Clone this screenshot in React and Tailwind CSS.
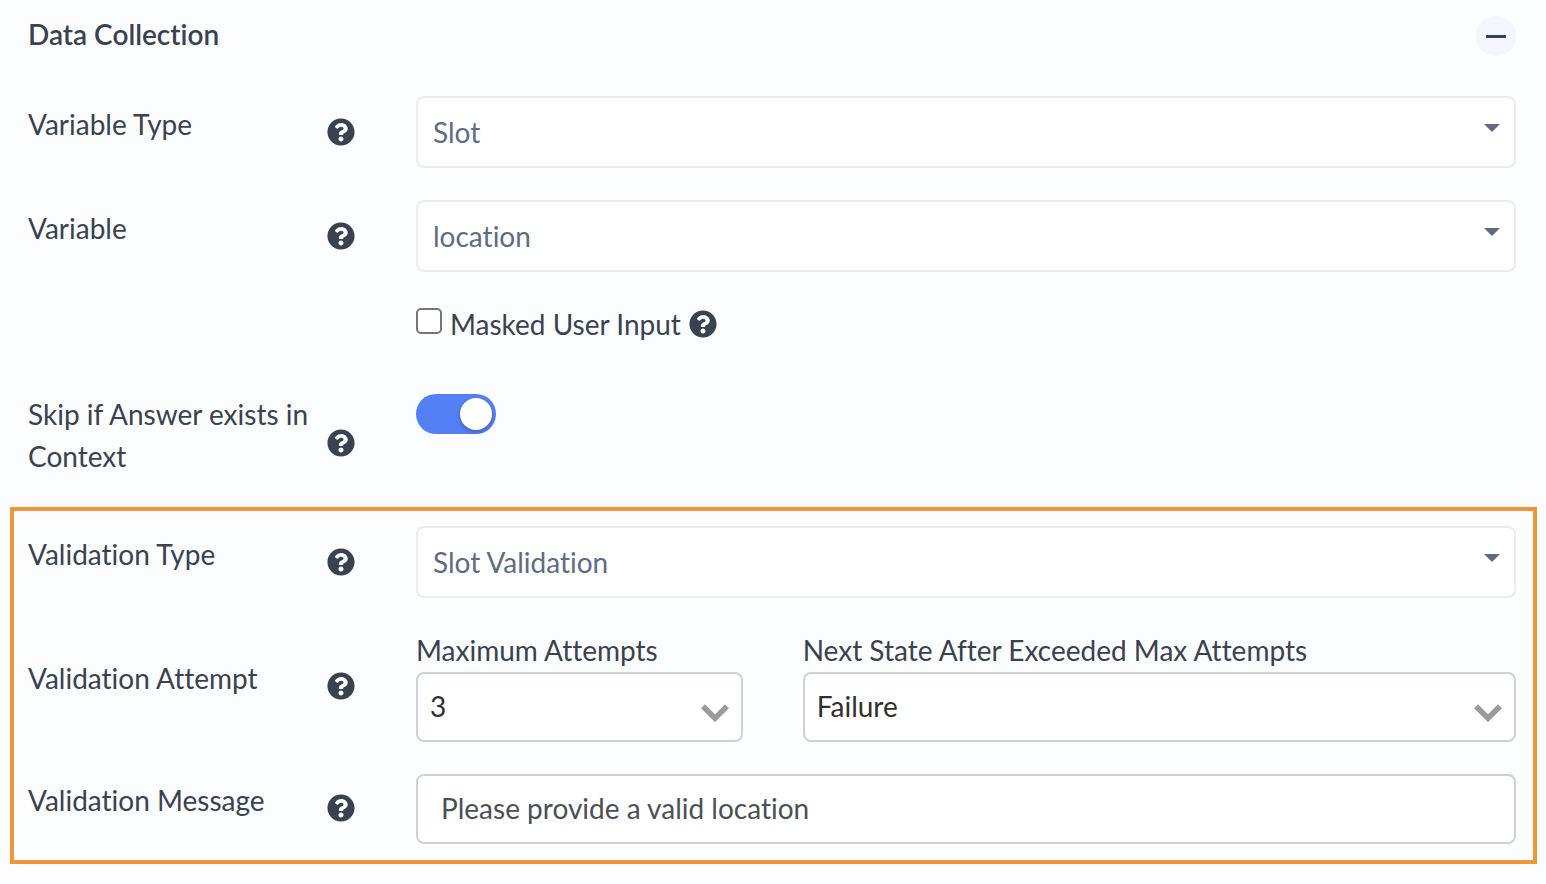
import { useState } from "react";
import { FaQuestionCircle } from "react-icons/fa";

function Help({ topic }) {
  return (
    <button type="button" aria-label={`Help: ${topic}`} className="block shrink-0 text-[#3a414f]">
      <FaQuestionCircle size={28} />
    </button>
  );
}

function Row({ label, htmlFor, offset = "pt-1.5", children }) {
  return (
    <div className="grid grid-cols-[327px_minmax(0,1fr)] items-start gap-x-[61px]">
      <div className={`flex items-center justify-between ${offset}`}>
        <label htmlFor={htmlFor} className="w-[296px] leading-[42px]">
          {label}
        </label>
        <div className="mt-4">
          <Help topic={label} />
        </div>
      </div>
      {children}
    </div>
  );
}

function Dropdown({ id, options }) {
  return (
    <div className="relative">
      <select
        id={id}
        className="block h-[72px] w-full appearance-none rounded-lg border-2 border-[#ebecf0] bg-white pr-14 pl-[15px] text-[#5f6b84]"
      >
        {options.map((o) => (
          <option key={o}>{o}</option>
        ))}
      </select>
      <svg viewBox="0 0 16 8" className="pointer-events-none absolute top-7 right-4 h-2 w-4 fill-[#5f6b84]">
        <path d="M0 0h16L8 8z" />
      </svg>
    </div>
  );
}

function Picker({ id, label, options, className = "" }) {
  return (
    <div className={className}>
      <label htmlFor={id} className="block h-[42px] leading-10">
        {label}
      </label>
      <div className="relative">
        <select
          id={id}
          className="block h-[70px] w-full appearance-none rounded-lg border-2 border-[#ced2d8] bg-white pr-14 pb-0.5 pl-3 text-[#2f2f2f]"
        >
          {options.map((o) => (
            <option key={o}>{o}</option>
          ))}
        </select>
        <svg viewBox="0 0 28 18" className="pointer-events-none absolute top-8 right-3.5 h-[18px] w-7">
          <path d="M2 2.2 14 14.2 26 2.2" fill="none" stroke="#9b9b9b" strokeWidth="5.6" />
        </svg>
      </div>
    </div>
  );
}

export default function App() {
  const [masked, setMasked] = useState(false);
  const [skip, setSkip] = useState(true);
  const [message, setMessage] = useState("Please provide a valid location");

  return (
    <main className="min-h-screen bg-[#fcfdff] pt-4 pr-[9px] pb-5 pl-2.5 font-['Lato','Noto_Sans',sans-serif] text-[28px] text-[#3a414f] [font-variant-ligatures:none]">
      <section className="flex flex-col pr-[21px] pl-[18px]">
        <header className="flex h-10 items-start justify-between">
          <h2 className="font-semibold leading-9">Data Collection</h2>
          <button
            type="button"
            aria-label="Collapse section"
            className="flex size-10 items-center justify-center rounded-full bg-[#f4f6fe]"
          >
            <span className="h-[3px] w-5 bg-[#3a414f]" />
          </button>
        </header>

        <div className="mt-10 flex flex-col gap-8">
          <Row label="Variable Type" htmlFor="variable-type">
            <Dropdown id="variable-type" options={["Slot"]} />
          </Row>
          <Row label="Variable" htmlFor="variable">
            <div>
              <Dropdown id="variable" options={["location"]} />
              <div className="mt-[31px] flex h-[42px] items-center gap-2">
                <input
                  id="masked"
                  type="checkbox"
                  checked={masked}
                  onChange={(e) => setMasked(e.target.checked)}
                  className="mb-1.5 size-[26px] appearance-none rounded-[5px] border-2 border-[#767676] bg-white checked:bg-[#557ff5]"
                />
                <label htmlFor="masked" className="leading-[42px]">
                  Masked User Input
                </label>
                <Help topic="Masked User Input" />
              </div>
            </div>
          </Row>
        </div>

        <div className="mt-12">
          <Row label="Skip if Answer exists in Context" htmlFor="skip" offset="pt-0">
            <input
              id="skip"
              type="checkbox"
              role="switch"
              checked={skip}
              onChange={(e) => setSkip(e.target.checked)}
              className="mt-px flex h-10 w-20 appearance-none justify-start rounded-full bg-[#c5cad6] p-1 before:size-8 before:rounded-full before:bg-white before:shadow-[0_2px_4px_rgba(0,0,0,0.25)] before:content-[''] checked:justify-end checked:bg-[#557ff5]"
            />
          </Row>
        </div>
      </section>

      <section className="mt-[30px] flex flex-col gap-8 border-4 border-[#f09637] pt-[15px] pr-[17px] pb-4 pl-3.5">
        <Row label="Validation Type" htmlFor="validation-type">
          <Dropdown id="validation-type" options={["Slot Validation"]} />
        </Row>
        <Row label="Validation Attempt" htmlFor="max-attempts" offset="pt-[26px]">
          <div className="grid grid-cols-3 gap-x-[60px]">
            <Picker id="max-attempts" label="Maximum Attempts" options={["3"]} />
            <Picker
              id="next-state"
              label="Next State After Exceeded Max Attempts"
              options={["Failure"]}
              className="col-span-2"
            />
          </div>
        </Row>
        <Row label="Validation Message" htmlFor="validation-message" offset="pt-1">
          <input
            id="validation-message"
            type="text"
            value={message}
            onChange={(e) => setMessage(e.target.value)}
            className="h-[70px] w-full rounded-lg border-2 border-[#ced2d8] bg-white px-[23px] pb-0.5 text-[#4b5057]"
          />
        </Row>
      </section>
    </main>
  );
}
